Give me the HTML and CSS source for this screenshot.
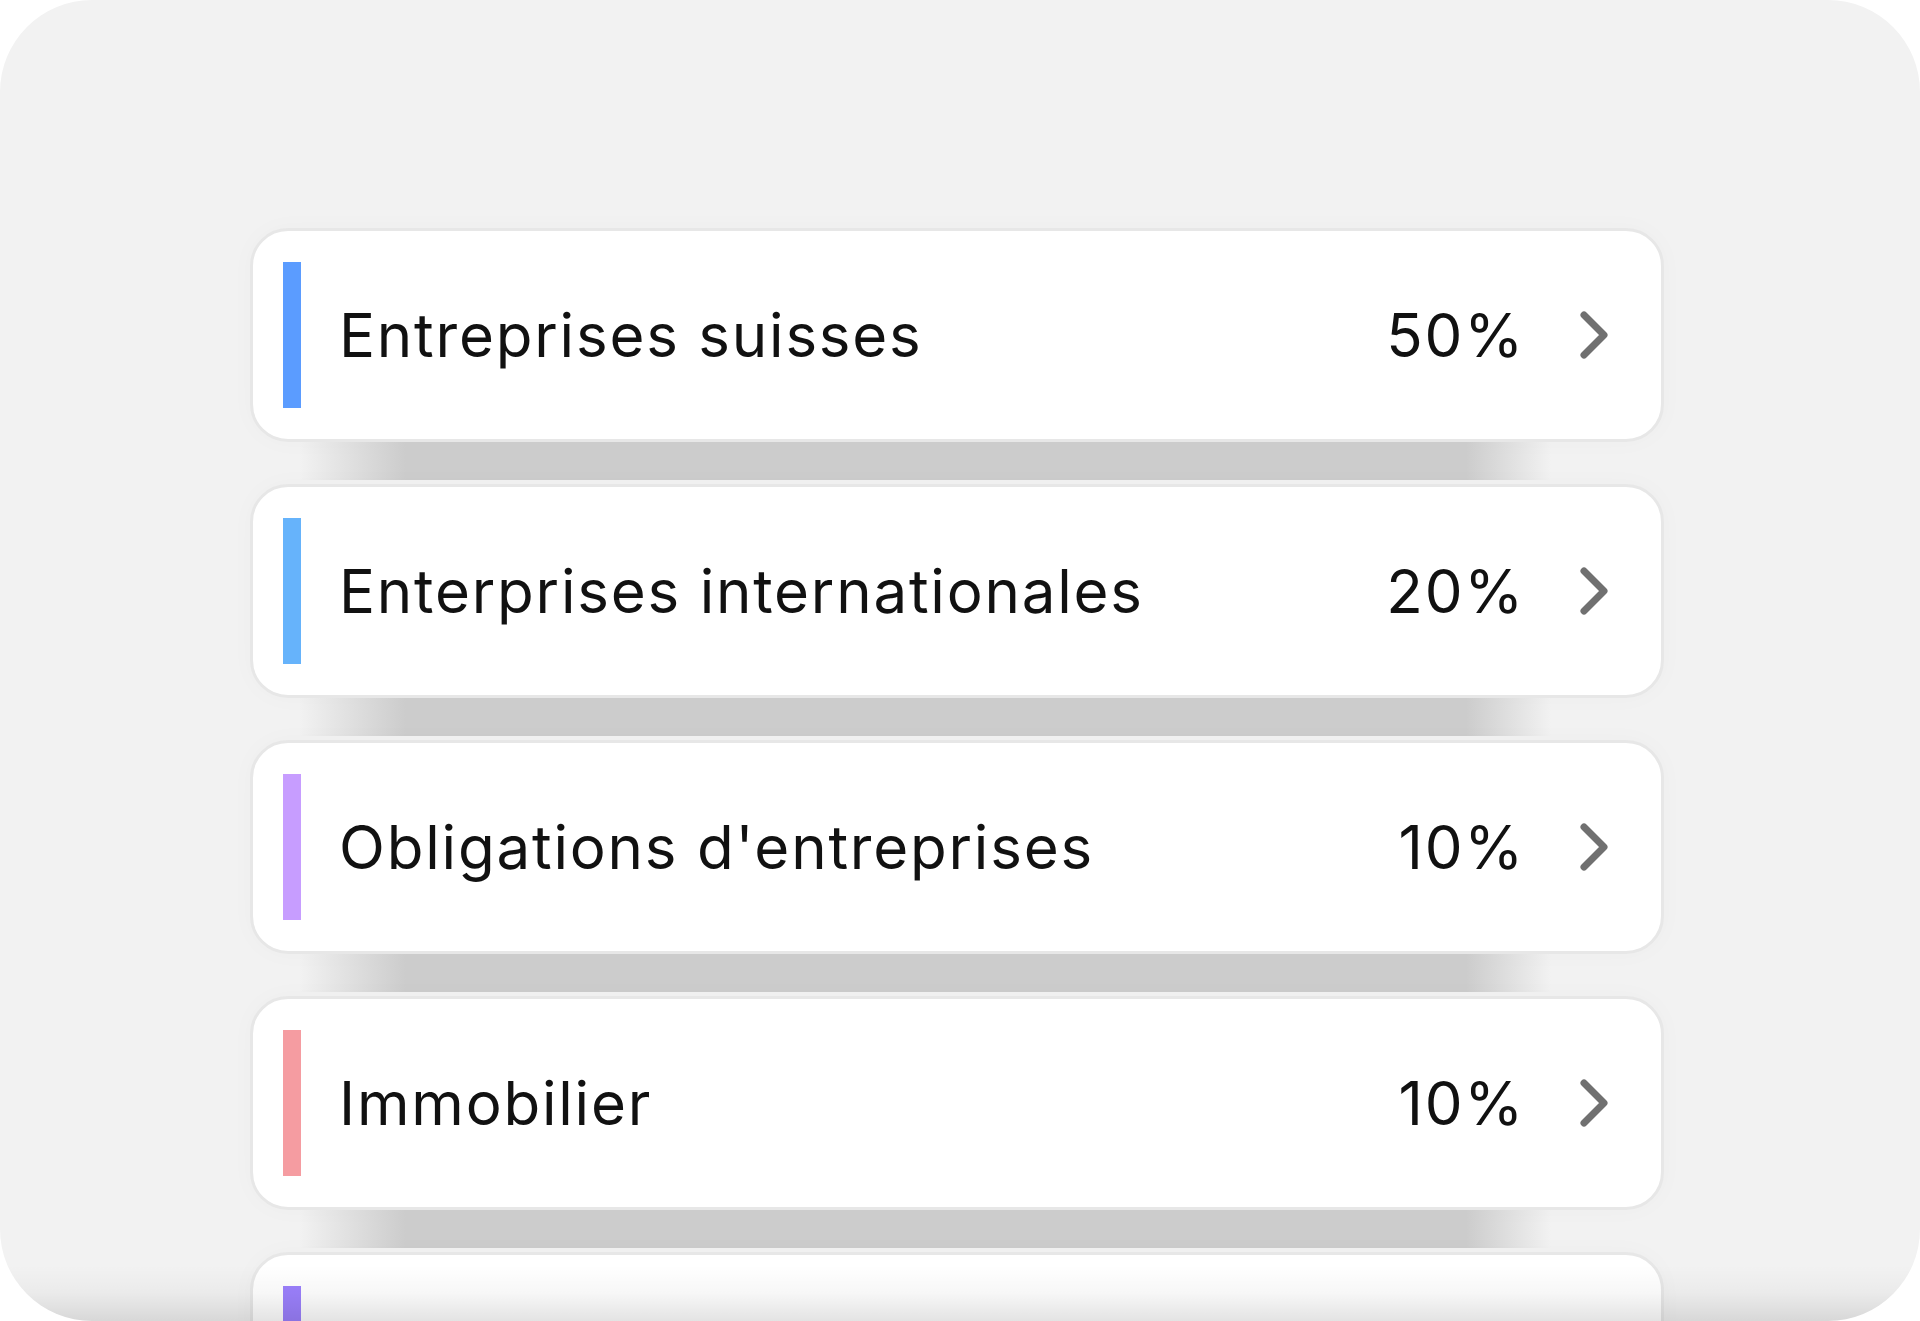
FILE: index.html
```html
<!DOCTYPE html>
<html lang="fr">
<head>
<meta charset="utf-8">
<title>Allocation</title>
<link rel="stylesheet" href="styles.css">
</head>
<body>
<div class="frame">
  <div class="list">
    <div class="item">
      <div class="card">
        <span class="bar bar-blue"></span>
        <span class="label">Entreprises suisses</span>
        <span class="pct">50%</span>
        <svg class="chev" viewBox="0 0 36 56" width="36" height="56"><path d="M8 8 L28 28 L8 48"/></svg>
      </div>
      <div class="band"></div>
    </div>
    <div class="item">
      <div class="card">
        <span class="bar bar-sky"></span>
        <span class="label">Enterprises internationales</span>
        <span class="pct">20%</span>
        <svg class="chev" viewBox="0 0 36 56" width="36" height="56"><path d="M8 8 L28 28 L8 48"/></svg>
      </div>
      <div class="band"></div>
    </div>
    <div class="item">
      <div class="card">
        <span class="bar bar-lav"></span>
        <span class="label">Obligations d'entreprises</span>
        <span class="pct">10%</span>
        <svg class="chev" viewBox="0 0 36 56" width="36" height="56"><path d="M8 8 L28 28 L8 48"/></svg>
      </div>
      <div class="band"></div>
    </div>
    <div class="item">
      <div class="card">
        <span class="bar bar-pink"></span>
        <span class="label">Immobilier</span>
        <span class="pct">10%</span>
        <svg class="chev" viewBox="0 0 36 56" width="36" height="56"><path d="M8 8 L28 28 L8 48"/></svg>
      </div>
      <div class="band"></div>
    </div>
    <div class="item">
      <div class="card">
        <span class="bar bar-purple"></span>
        <span class="label"></span>
      </div>
    </div>
  </div>
  <div class="fade"></div>
</div>
</body>
</html>
```

FILE: styles.css
```css
html, body {
  margin: 0;
  padding: 0;
  background: #ffffff;
}

.frame {
  position: relative;
  width: 1920px;
  height: 1321px;
  border-radius: 92px;
  background: #f2f2f2;
  overflow: hidden;
}

.list {
  display: flex;
  flex-direction: column;
  width: 1414px;
  margin-left: 250px;
  padding-top: 228px;
}

.item {
  display: flex;
  flex-direction: column;
}

.card {
  box-sizing: border-box;
  height: 214px;
  display: flex;
  align-items: center;
  background: #ffffff;
  border: 3px solid #e7e7e7;
  border-radius: 38px;
  padding: 0 49px 0 30px;
  box-shadow: 0 0 26px rgba(0, 0, 0, 0.025);
  font-family: Inter, "Liberation Sans", sans-serif;
  font-size: 60px;
  letter-spacing: 0.03em;
  color: #111111;
}

.bar {
  flex: none;
  width: 18px;
  height: 146px;
}
.bar-blue { background: #5b9cff; }
.bar-sky { background: #66b3fb; }
.bar-lav { background: #c79dff; }
.bar-pink { background: #f59ca1; }
.bar-purple { background: #9b80fc; }

.label {
  flex: 1;
  margin-left: 38px;
  white-space: nowrap;
}

.pct {
  flex: none;
  margin-right: 51px;
}

.chev {
  flex: none;
  display: block;
}
.chev path {
  fill: none;
  stroke: #707070;
  stroke-width: 7;
  stroke-linecap: round;
  stroke-linejoin: round;
}

.band {
  height: 38px;
  margin-bottom: 4px;
  background: linear-gradient(90deg,
    rgba(204, 204, 204, 0) 3.5%,
    #cccccc 11%,
    #cccccc 86%,
    rgba(204, 204, 204, 0) 92%);
}

.fade {
  position: absolute;
  left: 0;
  right: 0;
  bottom: 0;
  height: 56px;
  background: linear-gradient(180deg,
    rgba(0, 0, 0, 0) 0%,
    rgba(0, 0, 0, 0.03) 50%,
    rgba(0, 0, 0, 0.11) 100%);
  pointer-events: none;
}
```
